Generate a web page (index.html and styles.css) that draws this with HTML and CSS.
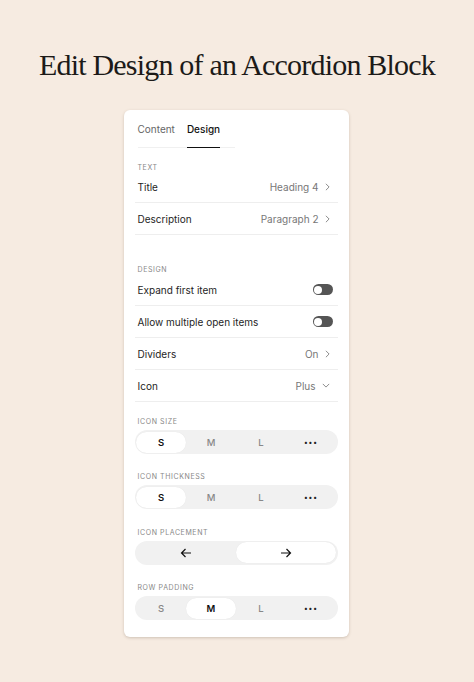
FILE: index.html
```html
<!DOCTYPE html>
<html lang="en">
<head>
<meta charset="utf-8">
<title>Edit Design of an Accordion Block</title>
<link rel="stylesheet" href="styles.css">
</head>
<body>
<main class="page">
  <h1 class="headline">Edit Design of an Accordion Block</h1>
  <section class="card">
    <nav class="tabs">
      <span class="tab">Content</span>
      <span class="tab tab-active">Design</span>
    </nav>

    <div class="group group-text">
      <div class="label">TEXT</div>
      <div class="row"><span class="row-name">Title</span><span class="row-value">Heading 4<svg class="chev" viewBox="0 0 6 10"><path d="M1 1l4 4-4 4"/></svg></span></div>
      <div class="row"><span class="row-name">Description</span><span class="row-value">Paragraph 2<svg class="chev" viewBox="0 0 6 10"><path d="M1 1l4 4-4 4"/></svg></span></div>
    </div>

    <div class="group group-design">
      <div class="label">DESIGN</div>
      <div class="row"><span class="row-name">Expand first item</span><span class="toggle"><span class="knob"></span></span></div>
      <div class="row"><span class="row-name">Allow multiple open items</span><span class="toggle"><span class="knob"></span></span></div>
      <div class="row"><span class="row-name">Dividers</span><span class="row-value">On<svg class="chev" viewBox="0 0 6 10"><path d="M1 1l4 4-4 4"/></svg></span></div>
      <div class="row"><span class="row-name">Icon</span><span class="row-value">Plus<svg class="chev-down" viewBox="0 0 10 6"><path d="M1 1l4 4 4-4"/></svg></span></div>
    </div>

    <div class="control-group first">
      <div class="label">ICON SIZE</div>
      <div class="seg">
        <span class="seg-item active">S</span><span class="seg-item">M</span><span class="seg-item">L</span><span class="seg-item dots">•••</span>
      </div>
    </div>

    <div class="control-group">
      <div class="label">ICON THICKNESS</div>
      <div class="seg">
        <span class="seg-item active">S</span><span class="seg-item">M</span><span class="seg-item">L</span><span class="seg-item dots">•••</span>
      </div>
    </div>

    <div class="control-group">
      <div class="label">ICON PLACEMENT</div>
      <div class="seg">
        <span class="seg-item"><svg class="arrow" viewBox="0 0 12 10"><path d="M11 5H1.5M5.5 1L1.5 5l4 4"/></svg></span>
        <span class="seg-item active"><svg class="arrow" viewBox="0 0 12 10"><path d="M1 5h9.5M6.5 1l4 4-4 4"/></svg></span>
      </div>
    </div>

    <div class="control-group">
      <div class="label">ROW PADDING</div>
      <div class="seg">
        <span class="seg-item">S</span><span class="seg-item active">M</span><span class="seg-item">L</span><span class="seg-item dots">•••</span>
      </div>
    </div>
  </section>
</main>
</body>
</html>
```

FILE: styles.css
```css
* { box-sizing: border-box; }
html, body { margin: 0; padding: 0; }
body {
  background: #f6ebe1;
  width: 474px;
  height: 682px;
  overflow: hidden;
  font-family: Inter, "Noto Sans", sans-serif;
  color: #222;
}
.page {
  display: flex;
  flex-direction: column;
  align-items: center;
}
.headline {
  margin: 45px 0 0;
  height: 40px;
  font-family: "Liberation Serif", "DejaVu Serif", serif;
  font-weight: normal;
  font-size: 30px;
  line-height: 40px;
  letter-spacing: -0.8px;
  color: #1c1a18;
}
.card {
  margin-top: 25px;
  margin-left: -2px;
  width: 225px;
  height: 527px;
  background: #fff;
  border-radius: 6px;
  box-shadow: 0 1px 3px rgba(90, 70, 50, 0.25);
  padding: 0 11px;
}
.tabs {
  display: flex;
  gap: 12px;
  width: 97px;
  margin-left: 3px;
  height: 38px;
  border-bottom: 1px solid #f0f0f0;
}
.tab {
  font-size: 10px;
  line-height: 38px;
  color: #666;
  position: relative;
}
.tab-active {
  color: #111;
  font-weight: 500;
}
.tab-active::after {
  content: "";
  position: absolute;
  left: 0;
  right: 0;
  bottom: -1px;
  height: 1.5px;
  background: #111;
}
.label {
  font-size: 7px;
  line-height: 10px;
  letter-spacing: 0.6px;
  color: #888;
  padding-left: 3px;
}
.group-text { margin-top: 15px; }
.group-text .label { margin-bottom: -2px; }
.group-design { margin-top: 30px; }
.group-design .label { margin-bottom: -1px; }
.row {
  display: flex;
  justify-content: space-between;
  align-items: center;
  height: 32px;
  padding: 0 8px 0 3px;
  border-bottom: 1px solid #eeeeee;
  font-size: 10px;
}
.row-name { color: #1e1e1e; }
.row-value {
  display: flex;
  align-items: center;
  gap: 6px;
  color: #777;
}
.chev {
  width: 5px;
  height: 8px;
  fill: none;
  stroke: #888;
  stroke-width: 1.2;
}
.chev-down {
  width: 8px;
  height: 5px;
  fill: none;
  stroke: #888;
  stroke-width: 1.2;
}
.row .toggle { margin-right: -3px; }
.toggle {
  width: 20px;
  height: 11px;
  border-radius: 6px;
  background: #555;
  display: flex;
  align-items: center;
  padding: 0 1.5px;
}
.knob {
  width: 8px;
  height: 8px;
  border-radius: 50%;
  background: #fff;
}
.control-group { margin-top: 18.4px; }
.control-group.first { margin-top: 15px; }
.control-group .label { margin-bottom: 3px; }
.seg {
  display: flex;
  height: 24px;
  border-radius: 12px;
  background: #f1f1f1;
  padding: 1.5px;
}
.seg-item {
  flex: 1;
  display: flex;
  align-items: center;
  justify-content: center;
  border-radius: 11px;
  font-size: 9.5px;
  font-weight: 500;
  color: #888;
}
.seg-item.active {
  background: #fff;
  color: #111;
  font-weight: 600;
  box-shadow: 0 0 1px rgba(0, 0, 0, 0.08);
}
.dots {
  font-size: 7px;
  letter-spacing: 1px;
  color: #222;
}
.arrow {
  width: 12px;
  height: 10px;
  fill: none;
  stroke: #111;
  stroke-width: 1.2;
}
```
